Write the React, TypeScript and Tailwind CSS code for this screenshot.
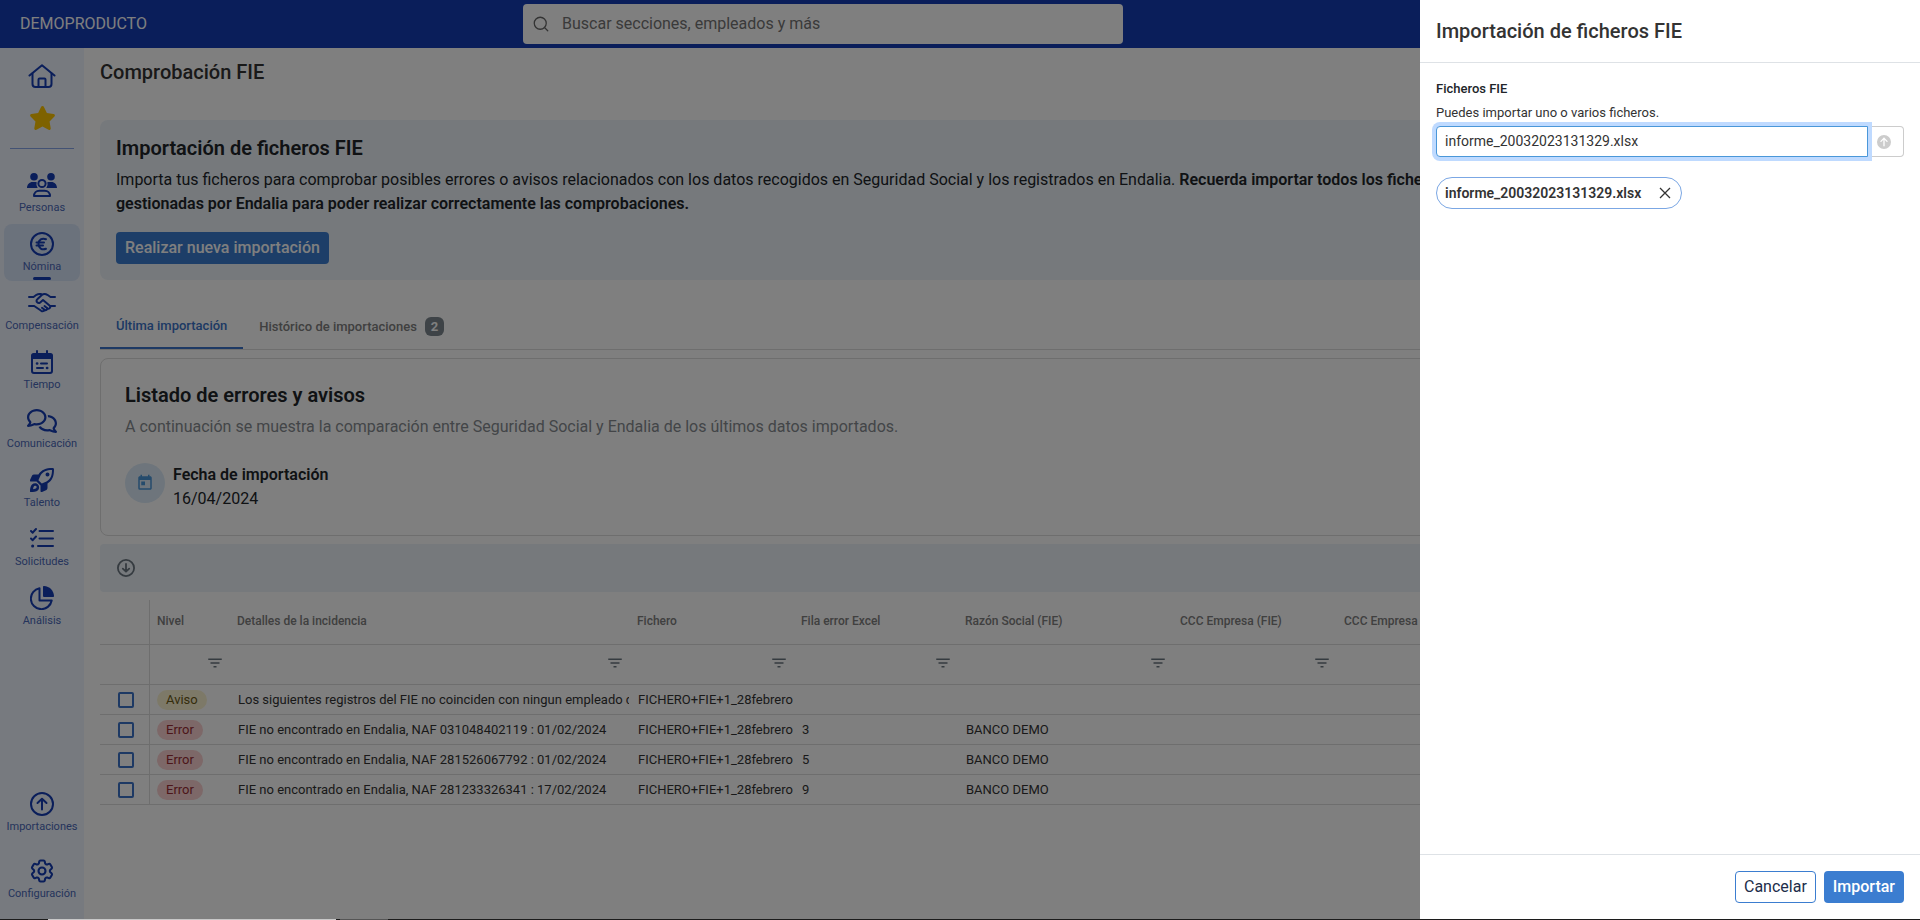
import { useState } from "react";
import type { ReactNode } from "react";
import { FaStar, FaRegComments, FaCircleArrowUp } from "react-icons/fa6";
import { HiOutlineCog6Tooth } from "react-icons/hi2";
import { MdFilterList, MdToday } from "react-icons/md";
import { FiSearch } from "react-icons/fi";

function Svg({ children, w = 24, h = 24 }: { children: ReactNode, w?: number, h?: number }) {
    return <svg width={w} height={h} viewBox={`0 0 ${w} ${h}`} fill="none" stroke="currentColor" strokeWidth="2" strokeLinecap="round" strokeLinejoin="round" aria-hidden="true">
        {children}
    </svg>
}

const HomeIcon = () => <Svg w={28} h={24}>
    <path d="M1.500 11.500 14 1.200l12.500 10.300" />
    <path d="M4.500 9.500V20a3 3 0 0 0 3 3h13a3 3 0 0 0 3-3V9.500" />
    <path d="M10.500 22.500v-7a1 1 0 0 1 1-1h5a1 1 0 0 1 1 1v7" />
</Svg>

const PeopleIcon = () => <Svg w={30} h={24}>
    <g fill="currentColor" stroke="none">
        <circle cx="7" cy="3.8" r="3.8" />
        <circle cx="24" cy="3.8" r="3.8" />
        <path d="M0 15c0-3.400 2.400-6 5.700-6h2.500c.6 0 1 .1 1.500.3a6 6 0 0 0 1 5.700z" />
        <path d="M30 15c0-3.400-2.400-6-5.700-6h-2.500c-.6 0-1 .1-1.500.3a6 6 0 0 1-1 5.700z" />
    </g>
    <circle cx="15" cy="10.500" r="3.600" />
    <path d="M7 23c0-3.300 2.300-5.300 5.300-5.300h5.400c3 0 5.300 2 5.300 5.300z" />
</Svg>

const EuroIcon = () => <Svg>
    <circle cx="12" cy="12" r="11" />
    <path d="M16 7.200c-4-1.600-7.500.6-7.500 4.800s3.500 6.400 7.500 4.800M6.500 10.600h7.500M6.500 13.500h6.500" />
</Svg>

const HandshakeIcon = () => <Svg w={28} h={20}>
    <path d="M1 4h4.500l3-2.200C9.500 1.200 10.500 1 11.500 1H13M27 4h-4.500l-3.200-2.200A5 5 0 0 0 16.500 1c-1 0-2 .4-2.700 1L9.300 6.300c-1 .9-1 2.200-.1 3 .8.8 2.200.8 3 .1L15 7l6.500 5.400c.9.8.8 2 .2 2.700-.7.7-1.600.8-2.400.2 0 1.500-1.300 2.300-2.600 1.600-.5 1.300-2.200 1.700-3.500.9L6.200 13H1M27 13h-5" />
    <path d="m16.500 13 2.500 2M14 14.800l2.200 1.800" />
</Svg>

const CalendarIcon = () => <Svg w={22} h={24}>
    <path d="M1 8V5.500A1.500 1.500 0 0 1 2.500 4h17A1.500 1.500 0 0 1 21 5.500V8z" fill="currentColor" />
    <path d="M1 8v13a2 2 0 0 0 2 2h16a2 2 0 0 0 2-2V8M6 1v4M16 1v4M10 13.500h6M6 18h6" />
    <path d="M6 13.500h.2M16 18h.2" strokeWidth="2.600" />
</Svg>

const RocketIcon = () => <Svg>
    <path fillRule="evenodd" fill="currentColor" stroke="none" d="M8.400 6.500C11.500 1.500 16 0 22.500 0 23.500 0 24 .5 24 1.500c0 6.500-1.500 11-6.500 14.100V20c0 .8-.4 1.500-1 1.900L12 24c-.8.3-1.500-.1-1.500-1v-5.500L6.500 13.500H1c-.9 0-1.300-.7-1-1.500l2.100-4.500c.4-.6 1.100-1 1.900-1zM22 2c-5.500 0-9 1.500-11.500 5.500L8.400 12.200l3.400 3.400 4.700-2.100C20.500 11 22 7.500 22 2zM17.500 4.500a2 2 0 1 1 0 4 2 2 0 0 1 0-4z" />
    <path fillRule="evenodd" fill="currentColor" stroke="none" d="M2 16.500c1.800-1.700 4.600-1.700 6 0 1.500 1.500 1.500 4.200 0 5.700C6.500 23.700 3 24 .8 24 0 24 0 23.500 0 23c0-2.200.5-5 2-6.500zm2.300 1.600c-.7.4-1.100 1.900-1.200 3.200 1.300-.1 2.700-.5 3.200-1.200 1.200-1.600-.5-3-2-2z" />
</Svg>

const ChecksIcon = () => <Svg>
    <path d="M9.500 4H23M9.500 11.500H23M8 19h15M1 4l1.700 1.700L6 2M1 11.500l1.700 1.700L6 9.500" />
    <path d="M2.600 19h.1" strokeWidth="3" />
</Svg>

const PieIcon = () => <Svg>
    <path d="M14 0c5.600.3 9.700 4.500 10 10 0 .6-.4 1-1 1H14a1 1 0 0 1-1-1V1c0-.6.4-1 1-1z" fill="currentColor" stroke="none" />
    <path d="M9.500 2.300A10.500 10.500 0 1 0 21.700 14.500H9.500z" />
</Svg>

const UploadIcon = () => <Svg>
    <circle cx="12" cy="12" r="11" />
    <path d="M12 17.500V7M7.500 11 12 6.800l4.500 4.200" />
</Svg>

const DownloadIcon = () => <svg width="18" height="18" viewBox="0 0 18 18" fill="none" stroke="currentColor" strokeWidth="1.800" strokeLinecap="round" strokeLinejoin="round" aria-hidden="true">
    <circle cx="9" cy="9" r="8.100" />
    <path d="M9 5v7.500M5.800 9.600 9 12.700l3.200-3.100" />
</svg>

const mainItems = [
    { label: "Personas", icon: <PeopleIcon /> },
    { label: "Nómina", icon: <EuroIcon />, active: true },
    { label: "Compensación", icon: <HandshakeIcon /> },
    { label: "Tiempo", icon: <CalendarIcon /> },
    { label: "Comunicación", icon: <FaRegComments size={30} /> },
    { label: "Talento", icon: <RocketIcon /> },
    { label: "Solicitudes", icon: <ChecksIcon /> },
    { label: "Análisis", icon: <PieIcon /> },
]

const bottomItems = [
    { label: "Importaciones", icon: <UploadIcon /> },
    { label: "Configuración", icon: <HiOutlineCog6Tooth size={28} strokeWidth={1.8} /> },
]

const columns = [
    { title: "Nivel", filter: true },
    { title: "Detalles de la incidencia", filter: true },
    { title: "Fichero", filter: true },
    { title: "Fila error Excel", filter: true },
    { title: "Razón Social (FIE)", filter: true },
    { title: "CCC Empresa (FIE)", filter: true },
    { title: "CCC Empresa", filter: false },
]

const rows = [
    { level: "Aviso", detail: "Los siguientes registros del FIE no coinciden con ningun empleado de", line: "", company: "" },
    { level: "Error", detail: "FIE no encontrado en Endalia, NAF 031048402119 : 01/02/2024", line: "3", company: "BANCO DEMO" },
    { level: "Error", detail: "FIE no encontrado en Endalia, NAF 281526067792 : 01/02/2024", line: "5", company: "BANCO DEMO" },
    { level: "Error", detail: "FIE no encontrado en Endalia, NAF 281233326341 : 17/02/2024", line: "9", company: "BANCO DEMO" },
]

type NavItemProps = { label: string, icon: ReactNode, active?: boolean }

function NavItem({ label, icon, active }: NavItemProps) {
    return <a href="#" className={`flex h-[57px] flex-col items-center rounded-lg pt-2 text-[#143cb4] ${active ? "bg-[#d7e4f9]" : ""}`}>
        <span className="flex h-6 items-center justify-center">{icon}</span>
        <span className="mt-1 text-[11px] leading-[14px] text-[#4a68b8]">{label}</span>
        {active && <span className="mt-[3px] h-[3px] w-[18px] rounded-full bg-[#143cb4]" />}
    </a>
}

function Sidebar() {
    return <nav className="flex w-[84px] shrink-0 flex-col justify-between bg-[#eff5ff] px-1 pb-3">
        <div>
            <div className="flex flex-col items-center gap-[18px] pt-4 pb-[18px]">
                <a href="#" aria-label="Inicio" className="text-[#143cb4]"><HomeIcon /></a>
                <a href="#" aria-label="Favoritos" className="text-[#fdc400]"><FaStar size={27} className="h-6" /></a>
            </div>
            <hr className="mx-[6px] mb-4 border-[#86a5e8]" />
            <div className="flex flex-col gap-[2px]">
                {mainItems.map(item => <NavItem key={item.label} {...item} />)}
            </div>
        </div>
        <div className="flex flex-col gap-[10px]">
            {bottomItems.map(item => <NavItem key={item.label} {...item} />)}
        </div>
    </nav>
}

function IncidentsTable() {
    const cell = "overflow-hidden whitespace-nowrap px-2"
    return <table className="mt-2 w-full table-fixed border-separate border-spacing-0 text-left [&_td]:border-b [&_td]:border-[#dcdcdc] [&_th]:border-b [&_th]:border-[#dcdcdc]">
        <colgroup>
            <col className="w-[50px]" />
            <col className="w-[80px]" />
            <col className="w-[400px]" />
            <col className="w-[164px]" />
            <col className="w-[164px]" />
            <col className="w-[215px]" />
            <col className="w-[164px]" />
            <col />
        </colgroup>
        <thead>
            <tr className="h-[45px] text-xs text-[#808080]">
                <th className="border-r"></th>
                {columns.map(({ title }) => <th key={title} className="overflow-hidden px-[7px] pb-[3px] font-medium whitespace-nowrap">{title}</th>)}
            </tr>
            <tr className="h-10">
                <td className="border-r"></td>
                {columns.map(({ title, filter }) => <td key={title} className="px-[6px] pb-[3px]">
                    {filter && <button aria-label={`Filtrar ${title}`} className="ml-auto block text-[#6b7680]"><MdFilterList size={18} /></button>}
                </td>)}
            </tr>
        </thead>
        <tbody>
            {rows.map(({ level, detail, line, company }, i) => <tr key={i} className="h-[30px] text-[13px] text-[#333]">
                <td className="border-r pl-[18px]">
                    <input type="checkbox" aria-label={`Seleccionar fila ${i + 1}`} className="block size-4 appearance-none rounded-[2px] border-2 border-[#3b73c8]" />
                </td>
                <td className="px-[7px]">
                    <span className={`block w-fit rounded-full px-[9px] leading-5 ${level === "Aviso" ? "bg-[#fbf3d0] text-[#6b5a17]" : "bg-[#fad0d0] text-[#9b2c34]"}`}>{level}</span>
                </td>
                <td className="overflow-hidden pr-px pl-2 whitespace-nowrap"><div className="overflow-hidden">{detail}</div></td>
                <td className="pl-2 whitespace-nowrap">FICHERO+FIE+1_28febrero</td>
                <td className={cell}>{line}</td>
                <td className={cell}>{company}</td>
                <td></td>
                <td></td>
            </tr>)}
        </tbody>
    </table>
}

function MainContent() {
    return <main className="min-w-0 flex-1 px-4 pt-3">
        <h1 className="text-xl leading-6 font-medium text-[#333]">Comprobación FIE</h1>
        <section className="mt-9 rounded-lg bg-[#ecf3f9] p-4 text-[#212529]">
            <h2 className="text-xl leading-6 font-semibold">Importación de ficheros FIE</h2>
            <p className="mt-2 leading-6">
                Importa tus ficheros para comprobar posibles errores o avisos relacionados con los datos recogidos en Seguridad Social y los registrados en Endalia. <strong className="font-semibold">Recuerda importar todos los ficheros<br />gestionadas por Endalia para poder realizar correctamente las comprobaciones.</strong>
            </p>
            <button className="mt-4 block h-8 rounded bg-[#3b7dd0] px-[9px] font-medium text-white">Realizar nueva importación</button>
        </section>
        <div className="mt-6 flex h-[46px] border-b border-[#dcdcdc] text-[13px] font-medium">
            <button className="border-b-2 border-[#3b73c8] px-4 text-[#3b73c8]">Última importación</button>
            <button className="flex items-center gap-2 px-4 text-[#808080]">
                Histórico de importaciones
                <span className="rounded-md bg-[#7c878e] px-[6px] leading-[19px] font-bold text-white">2</span>
            </button>
        </div>
        <section className="mt-2 rounded-lg border border-[#dcdcdc] p-6">
            <h2 className="text-xl leading-6 font-semibold text-[#212529]">Listado de errores y avisos</h2>
            <p className="mt-2 leading-6 text-[#868b90]">A continuación se muestra la comparación entre Seguridad Social y Endalia de los últimos datos importados.</p>
            <div className="mt-6 flex gap-2">
                <span className="flex size-10 items-center justify-center rounded-full bg-[#dcebf8] text-[#4a97d9]"><MdToday size={18} /></span>
                <div className="leading-6 text-[#212529]">
                    <p className="font-semibold">Fecha de importación</p>
                    <p>16/04/2024</p>
                </div>
            </div>
        </section>
        <div className="mt-2 flex h-12 items-center rounded bg-[#ecf3f9] px-[17px] text-[#6b7680]">
            <button aria-label="Descargar"><DownloadIcon /></button>
        </div>
        <IncidentsTable />
    </main>
}

function ImportPanel() {
    const [files, setFiles] = useState(["informe_20032023131329.xlsx"])
    const [name, setName] = useState("informe_20032023131329.xlsx")

    return <aside role="dialog" aria-labelledby="panel-title" className="fixed inset-y-0 right-0 flex w-[500px] flex-col bg-white text-[#333] [&_button]:cursor-pointer">
        <header className="border-b border-[#dee2e6] px-4 py-[19px]">
            <h2 id="panel-title" className="text-xl leading-6 font-medium">Importación de ficheros FIE</h2>
        </header>
        <div className="flex-1 px-4 pt-4">
            <label htmlFor="files" className="block text-[13px] leading-5 font-medium text-[#212529]">Ficheros FIE</label>
            <p className="mt-1 text-[13px] leading-5">Puedes importar uno o varios ficheros.</p>
            <div className="mt-[3px] flex h-[31px]">
                <input id="files" value={name} onChange={e => setName(e.target.value)} className="relative z-10 min-w-0 flex-1 rounded-l border border-[#4a97d9] bg-white px-2 pb-[2px] text-sm text-[#333] shadow-[0_0_0_4px_#bfdaff] outline-none" />
                <button aria-label="Subir fichero" className="flex w-9 items-center justify-center rounded-r border border-l-0 border-[#ccc] pr-1 text-[#ccc]"><FaCircleArrowUp size={14} /></button>
            </div>
            {files.map(file => <div key={file} className="mt-5 flex h-8 w-fit items-center gap-3 rounded-full border border-[#7ba7e4] pr-1 pl-2 text-sm font-semibold">
                {file}
                <button aria-label={`Quitar ${file}`} onClick={() => setFiles(old => old.filter(f => f !== file))} className="p-1">
                    <svg width="16" height="16" viewBox="0 0 16 16" fill="none" stroke="currentColor" strokeWidth="1.300"><path d="m3 3 10 10M13 3 3 13" /></svg>
                </button>
            </div>)}
        </div>
        <footer className="flex justify-end gap-2 border-t border-[#dee2e6] px-4 pt-4 pb-[17px] leading-6 font-medium">
            <button className="h-8 rounded border border-[#3b7dd0] px-2 font-normal text-[#212d4a]">Cancelar</button>
            <button className="h-8 rounded bg-[#3b7dd0] px-[9px] text-white">Importar</button>
        </footer>
    </aside>
}

export default function App() {
    return <div className="flex min-h-screen flex-col bg-white font-['Roboto',sans-serif]">
        <header className="flex h-12 shrink-0 items-center bg-[#143cb4] pl-5 text-white">
            <span className="w-[503px]">DEMOPRODUCTO</span>
            <label className="flex h-10 w-[600px] items-center gap-3 rounded bg-white pl-[9px] text-[#666]">
                <FiSearch size={18} strokeWidth={1.7} />
                <input type="search" aria-label="Buscar" placeholder="Buscar secciones, empleados y más" className="flex-1 outline-none placeholder:text-[#757575]" />
            </label>
        </header>
        <div className="flex flex-1">
            <Sidebar />
            <MainContent />
        </div>
        <div className="fixed inset-0 bg-black/50" />
        <ImportPanel />
        <div className="fixed inset-x-0 bottom-0 flex h-px bg-[#1c1c1c]">
            <span className="ml-12 w-72 bg-[#c8c8c8]" />
            <span className="ml-1 w-12 bg-[#555]" />
        </div>
    </div>
}
